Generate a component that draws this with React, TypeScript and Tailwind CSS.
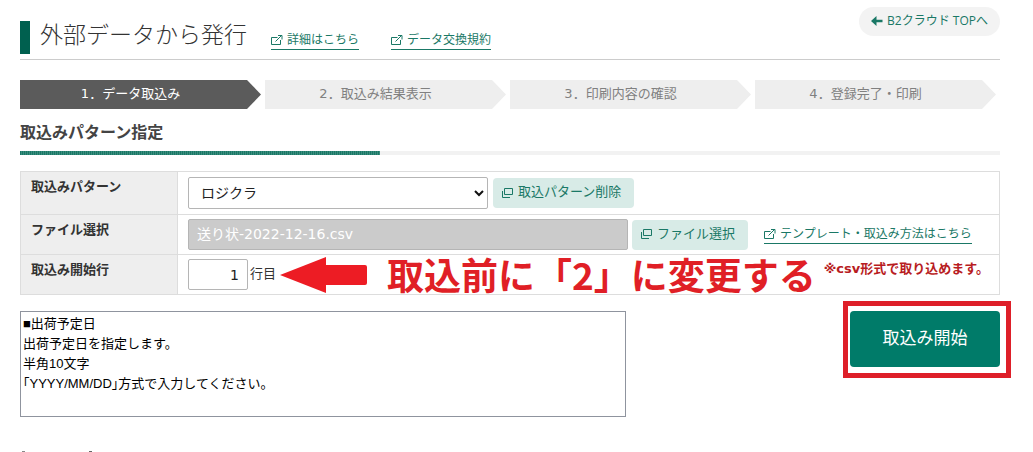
import { useState } from 'react';

const steps = ['1．データ取込み', '2．取込み結果表示', '3．印刷内容の確認', '4．登録完了・印刷'];

const helpText = `■出荷予定日
出荷予定日を指定します。
半角10文字
「YYYY/MM/DD」方式で入力してください。`;

function ExternalIcon() {
    return (
        <svg width="12" height="12" viewBox="0 0 12 12" fill="none" stroke="currentColor" className="shrink-0">
            <path d="M6.5 3.5H0.5v7h9V6" />
            <path d="M4.5 7.5L10.5 1.5M7 1.5h4V5.5" />
        </svg>
    );
}

function WindowIcon() {
    return (
        <svg width="11" height="11" viewBox="0 0 11 11" fill="none" stroke="currentColor" className="shrink-0">
            <path d="M2.5 1.5h8v6h-8z" />
            <path d="M0.5 4v6.5H8" />
        </svg>
    );
}

function TextLink({ children }: { children: React.ReactNode }) {
    return (
        <a href="#" className="flex items-center gap-1 border-b border-[#1a7866] text-xs leading-[18px] text-[#1a7866]">
            <ExternalIcon />
            {children}
        </a>
    );
}

function SubButton({ children }: { children: React.ReactNode }) {
    return (
        <button type="button" className="flex h-[30px] items-center gap-[5px] rounded bg-[#d8ebe7] pr-[13px] pb-[2px] pl-[9px] text-[13px] text-[#1a7866]">
            <WindowIcon />
            {children}
        </button>
    );
}

export default function App() {
    const [pattern, setPattern] = useState('ロジクラ');
    const [startRow, setStartRow] = useState('1');

    const thClass = 'w-[157px] border border-[#ddd] bg-[#eee] px-[10px] pt-[5px] text-left align-top text-[13px] leading-5 font-bold';

    return (
        <main className="bg-white pr-[33px] pl-5 font-['DejaVu_Sans','Noto_Sans_CJK_JP',sans-serif] text-[#333]">
            <header className="flex h-[60px] items-start border-b border-[#ccc]">
                <h1 className="mt-[21px] flex h-[33px] items-center border-l-[10px] border-[#00604f] pl-[10px] pb-1 text-[23px] font-light">
                    外部データから発行
                </h1>
                <nav className="mt-[31px] ml-6 flex gap-8">
                    <TextLink>詳細はこちら</TextLink>
                    <TextLink>データ交換規約</TextLink>
                </nav>
                <a href="#" className="mt-[7px] ml-auto flex h-[29px] items-center gap-1 rounded-full bg-[#f3f3f3] px-3 pb-[2px] font-['Open_Sans','Noto_Sans_CJK_JP',sans-serif] text-xs text-[#1a7866]">
                    <svg width="12" height="10" viewBox="0 0 12 10" fill="currentColor">
                        <path d="M0 5L5.5 0V3.7H11.5V6.3H5.5V10z" />
                    </svg>
                    B2クラウド TOPへ
                </a>
            </header>

            <ol className="mt-5 grid grid-cols-4">
                {steps.map((step, i) => (
                    <li
                        key={step}
                        className={`mr-1 h-[29px] pr-5 text-center text-[13px] leading-7 [clip-path:polygon(0_0,calc(100%-14px)_0,100%_50%,calc(100%-14px)_100%,0_100%)] ${
                            i === 0 ? 'bg-[#5b5b5b] text-white' : 'bg-[#eee] text-[#808080]'
                        }`}
                    >
                        {step}
                    </li>
                ))}
            </ol>

            <h2 className="mt-3 text-base leading-6 font-bold text-[#444]">取込みパターン指定</h2>
            <div className="mt-[6px] h-1 bg-[#f2f2f2]">
                <div className="h-1 w-[360px] bg-[repeating-linear-gradient(90deg,#1a7866_0_1px,#3b8d7e_1px_2px)]" />
            </div>

            <table className="mt-4 w-full border-collapse">
                <tbody>
                    <tr>
                        <th scope="row" className={thClass}>
                            <label htmlFor="pattern">取込みパターン</label>
                        </th>
                        <td className="border border-[#ddd] px-[10px] py-[5px]">
                            <div className="flex items-center gap-[5px]">
                                <div className="relative w-[300px]">
                                    <select
                                        id="pattern"
                                        value={pattern}
                                        onChange={(e) => setPattern(e.target.value)}
                                        className="h-8 w-full appearance-none rounded-xs border border-[#b5b5b5] bg-white px-3 text-sm text-[#222]"
                                    >
                                        <option>ロジクラ</option>
                                    </select>
                                    <svg width="10" height="7" viewBox="0 0 10 7" fill="none" stroke="#111" strokeWidth="2" className="pointer-events-none absolute top-[13px] right-1">
                                        <path d="M1 1l4 4 4-4" />
                                    </svg>
                                </div>
                                <SubButton>取込パターン削除</SubButton>
                            </div>
                        </td>
                    </tr>
                    <tr>
                        <th scope="row" className={thClass}>
                            <label htmlFor="file">ファイル選択</label>
                        </th>
                        <td className="border border-[#ddd] px-[10px] py-1">
                            <div className="flex items-center gap-1">
                                <input
                                    id="file"
                                    type="text"
                                    readOnly
                                    value="送り状-2022-12-16.csv"
                                    className="h-[31px] w-[440px] rounded-xs border border-[#b5b5b5] bg-[#cbcbcb] px-2 pb-1 text-sm text-white"
                                />
                                <SubButton>ファイル選択</SubButton>
                                <div className="ml-3">
                                    <TextLink>テンプレート・取込み方法はこちら</TextLink>
                                </div>
                            </div>
                        </td>
                    </tr>
                    <tr>
                        <th scope="row" className={thClass}>
                            <label htmlFor="start-row">取込み開始行</label>
                        </th>
                        <td className="border border-[#ddd] px-[10px] py-1">
                            <div className="flex h-[31px] items-center whitespace-nowrap">
                                <input
                                    id="start-row"
                                    type="text"
                                    value={startRow}
                                    onChange={(e) => setStartRow(e.target.value)}
                                    className="h-[31px] w-[60px] rounded-xs border border-[#b5b5b5] bg-white px-2 text-right text-sm text-[#222]"
                                />
                                <span className="ml-[2px] pb-[2px] text-[13px]">行目</span>
                                <svg width="87" height="36" viewBox="0 0 87 36" fill="#ed1c24" className="ml-1 shrink-0">
                                    <path d="M0 18L46 0V8H85Q87 8 87 10V26Q87 28 85 28H46V36z" />
                                </svg>
                                <strong className="ml-5 font-['Noto_Sans_CJK_JP',sans-serif] text-[37px] leading-[31px] text-[#e01f26]">取込前に「2」に変更する</strong>
                                <span className="ml-auto self-start text-[13px] leading-5 font-bold text-[#b81c22]">※csv形式で取り込めます。</span>
                            </div>
                        </td>
                    </tr>
                </tbody>
            </table>

            <div className="mt-4 flex items-start justify-between">
                <textarea
                    readOnly
                    aria-label="項目の説明"
                    value={helpText}
                    className="h-[106px] w-[606px] resize-none border border-[#8f949e] px-[2px] py-[2px] font-['Liberation_Sans','Noto_Sans_CJK_JP',sans-serif] text-[13px] leading-5 text-black [font-feature-settings:'halt']"
                />
                <div className="relative">
                    <button type="button" className="h-14 w-[150px] rounded bg-[#007b69] text-[17px] text-white">
                        取込み開始
                    </button>
                    <div className="pointer-events-none absolute -top-[10px] -right-[11px] -bottom-[11px] -left-[7px] border-5 border-[#de1f29]" />
                </div>
            </div>

            <div className="mt-[34px] flex gap-16 pl-[2px]">
                <span className="h-px w-[3px] bg-[#888]" />
                <span className="h-px w-[3px] bg-[#666]" />
            </div>
        </main>
    );
}
